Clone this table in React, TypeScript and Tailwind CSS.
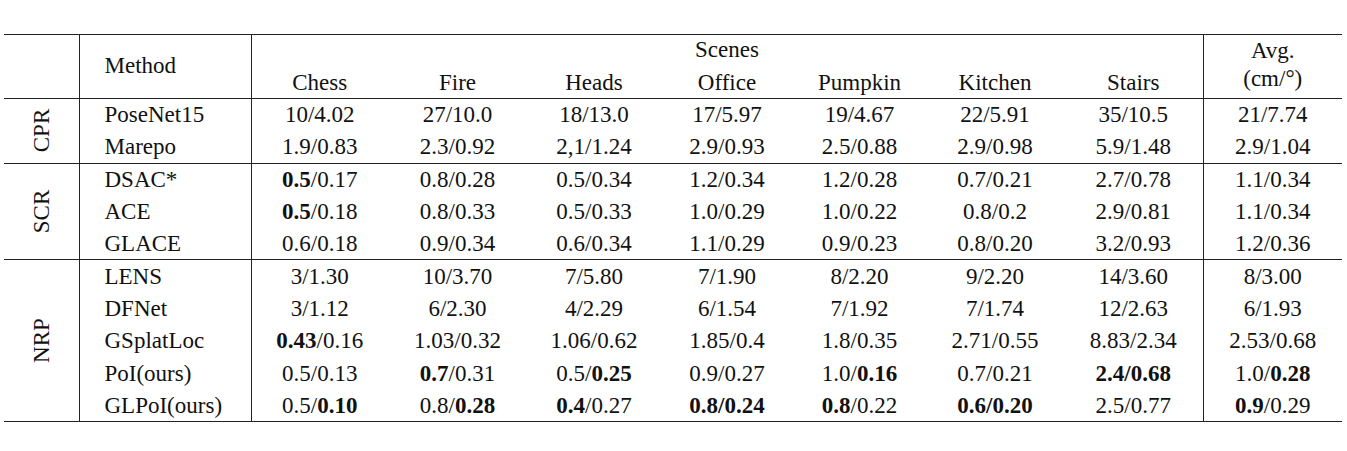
type Cell = [string, string, number];

const SCENES = ['Chess', 'Fire', 'Heads', 'Office', 'Pumpkin', 'Kitchen', 'Stairs'];

// flag: 0 none, 1 first bold, 2 second bold, 3 both bold
const GROUPS: { name: string; rows: { method: string; cells: Cell[] }[] }[] = [
  {
    name: 'CPR',
    rows: [
      { method: 'PoseNet15', cells: [['10', '4.02', 0], ['27', '10.0', 0], ['18', '13.0', 0], ['17', '5.97', 0], ['19', '4.67', 0], ['22', '5.91', 0], ['35', '10.5', 0], ['21', '7.74', 0]] },
      { method: 'Marepo', cells: [['1.9', '0.83', 0], ['2.3', '0.92', 0], ['2,1', '1.24', 0], ['2.9', '0.93', 0], ['2.5', '0.88', 0], ['2.9', '0.98', 0], ['5.9', '1.48', 0], ['2.9', '1.04', 0]] },
    ],
  },
  {
    name: 'SCR',
    rows: [
      { method: 'DSAC*', cells: [['0.5', '0.17', 1], ['0.8', '0.28', 0], ['0.5', '0.34', 0], ['1.2', '0.34', 0], ['1.2', '0.28', 0], ['0.7', '0.21', 0], ['2.7', '0.78', 0], ['1.1', '0.34', 0]] },
      { method: 'ACE', cells: [['0.5', '0.18', 1], ['0.8', '0.33', 0], ['0.5', '0.33', 0], ['1.0', '0.29', 0], ['1.0', '0.22', 0], ['0.8', '0.2', 0], ['2.9', '0.81', 0], ['1.1', '0.34', 0]] },
      { method: 'GLACE', cells: [['0.6', '0.18', 0], ['0.9', '0.34', 0], ['0.6', '0.34', 0], ['1.1', '0.29', 0], ['0.9', '0.23', 0], ['0.8', '0.20', 0], ['3.2', '0.93', 0], ['1.2', '0.36', 0]] },
    ],
  },
  {
    name: 'NRP',
    rows: [
      { method: 'LENS', cells: [['3', '1.30', 0], ['10', '3.70', 0], ['7', '5.80', 0], ['7', '1.90', 0], ['8', '2.20', 0], ['9', '2.20', 0], ['14', '3.60', 0], ['8', '3.00', 0]] },
      { method: 'DFNet', cells: [['3', '1.12', 0], ['6', '2.30', 0], ['4', '2.29', 0], ['6', '1.54', 0], ['7', '1.92', 0], ['7', '1.74', 0], ['12', '2.63', 0], ['6', '1.93', 0]] },
      { method: 'GSplatLoc', cells: [['0.43', '0.16', 1], ['1.03', '0.32', 0], ['1.06', '0.62', 0], ['1.85', '0.4', 0], ['1.8', '0.35', 0], ['2.71', '0.55', 0], ['8.83', '2.34', 0], ['2.53', '0.68', 0]] },
      { method: 'PoI(ours)', cells: [['0.5', '0.13', 0], ['0.7', '0.31', 1], ['0.5', '0.25', 2], ['0.9', '0.27', 0], ['1.0', '0.16', 2], ['0.7', '0.21', 0], ['2.4', '0.68', 3], ['1.0', '0.28', 2]] },
      { method: 'GLPoI(ours)', cells: [['0.5', '0.10', 2], ['0.8', '0.28', 2], ['0.4', '0.27', 1], ['0.8', '0.24', 3], ['0.8', '0.22', 1], ['0.6', '0.20', 3], ['2.5', '0.77', 0], ['0.9', '0.29', 1]] },
    ],
  },
];

function Value({ cell }: { cell: Cell }) {
  const [a, b, f] = cell;
  return (
    <>
      <span className={f & 1 ? 'font-bold' : ''}>{a}</span>
      <span className={f === 3 ? 'font-bold' : ''}>/</span>
      <span className={f & 2 ? 'font-bold' : ''}>{b}</span>
    </>
  );
}

export default function App() {
  return (
    <div className="w-[1347px] h-[451px] bg-white text-[#111] pt-[34px] pl-[4px] font-['Liberation_Serif','Times_New_Roman',serif]">
      <table className="table-fixed border-collapse w-[1338px] text-[23px] leading-none border-y border-[#222]">
        <colgroup>
          <col className="w-[75px]" />
          <col className="w-[172px]" />
          <col className="w-[137px]" />
          <col className="w-[139px]" />
          <col className="w-[134px]" />
          <col className="w-[132px]" />
          <col className="w-[133px]" />
          <col className="w-[138px]" />
          <col className="w-[139px]" />
          <col className="w-[139px]" />
        </colgroup>
        <thead>
          <tr className="h-[32px]">
            <th rowSpan={2} className="border-r border-[#222]" />
            <th rowSpan={2} className="border-r border-[#222] text-left font-normal pl-[25px] pb-[2px]">Method</th>
            <th colSpan={7} className="font-normal pb-[2px]">Scenes</th>
            <th rowSpan={2} className="border-l border-[#222] font-normal">
              <div className="flex flex-col items-center gap-[5px] pb-[4px]">
                <span>Avg.</span>
                <span>(cm/°)</span>
              </div>
            </th>
          </tr>
          <tr className="h-[32px]">
            {SCENES.map((s) => (
              <th key={s} className="font-normal">{s}</th>
            ))}
          </tr>
        </thead>
        {GROUPS.map((g) => (
          <tbody key={g.name} className="border-t border-[#222]">
            {g.rows.map((r, i) => (
              <tr key={r.method} className="h-[32.3px]">
                {i === 0 && (
                  <td rowSpan={g.rows.length} className="border-r border-[#222] text-center align-middle">
                    <span className="inline-block -rotate-90 whitespace-nowrap">{g.name}</span>
                  </td>
                )}
                <td className="border-r border-[#222] pl-[25px] whitespace-nowrap">{r.method}</td>
                {r.cells.map((c, j) => (
                  <td key={j} className={`text-center whitespace-nowrap ${j === 7 ? 'border-l border-[#222]' : ''}`}>
                    <Value cell={c} />
                  </td>
                ))}
              </tr>
            ))}
          </tbody>
        ))}
      </table>
    </div>
  );
}
